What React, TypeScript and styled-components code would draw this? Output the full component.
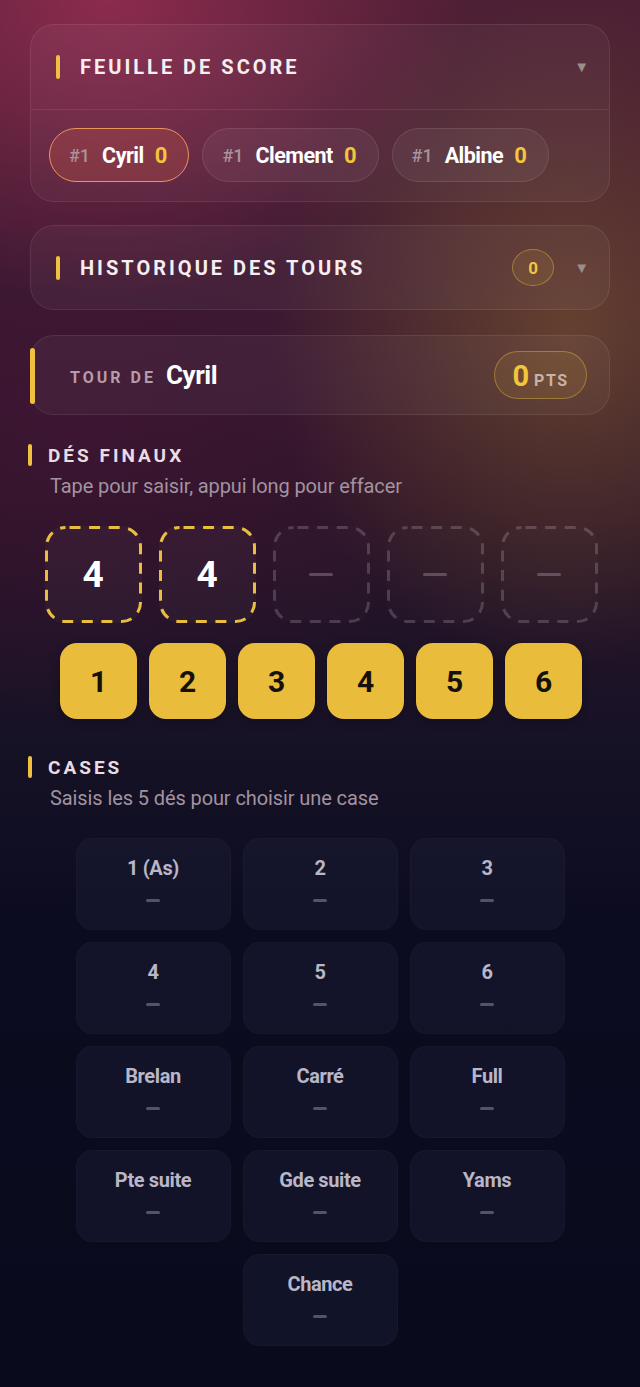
import React from "react";
import styled, { createGlobalStyle } from "styled-components";

const Global = createGlobalStyle`
  html, body { margin: 0; padding: 0; }
  body {
    font-family: Roboto, "Noto Sans", "Liberation Sans", sans-serif;
    background: #090a1c;
  }
  * { box-sizing: border-box; }
`;

const Page = styled.div`
  min-height: 1387px;
  width: 640px;
  padding: 24px 30px 40px 28px;
  background:
    radial-gradient(ellipse 360px 300px at 110px 0px, rgba(150, 45, 82, 0.85) 0%, rgba(150, 45, 82, 0) 100%),
    radial-gradient(ellipse 300px 340px at 570px 330px, rgba(130, 90, 48, 0.6) 0%, rgba(130, 90, 48, 0) 100%),
    radial-gradient(ellipse 420px 300px at 80px 420px, rgba(70, 20, 55, 0.55) 0%, rgba(70, 20, 55, 0) 100%),
    linear-gradient(180deg, #4e1f35 0%, #3a1a30 22%, #2a1428 38%, #161226 54%, #0c0c20 66%, #090a1c 100%);
  display: flex;
  flex-direction: column;
  color: #fff;
`;

const Card = styled.div<{ $mt?: number }>`
  margin-left: 2px;
  margin-top: ${(p) => p.$mt ?? 0}px;
  border-radius: 24px;
  background: rgba(255, 255, 255, 0.04);
  border: 1px solid rgba(255, 255, 255, 0.08);
  position: relative;
`;

const CardHeader = styled.div<{ $h: number }>`
  height: ${(p) => p.$h}px;
  display: flex;
  align-items: center;
  padding: 0 20px 0 25px;
`;

const Bar = styled.span<{ $h?: number }>`
  width: 4px;
  height: ${(p) => p.$h ?? 24}px;
  border-radius: 3px;
  background: #f0c040;
  flex: none;
`;

const HeaderTitle = styled.h2`
  margin: 0 0 0 20px;
  font-size: 20px;
  font-weight: 700;
  letter-spacing: 3px;
  color: #f6eef0;
  flex: 1;
`;

const Caret = styled.span`
  color: #9c8c8e;
  font-size: 15px;
  margin-left: 20px;
`;

const Divider = styled.div`
  height: 1px;
  background: rgba(255, 255, 255, 0.08);
`;

const ChipRow = styled.div`
  display: flex;
  gap: 13px;
  padding: 18px 18px 19px 18px;
`;

const Chip = styled.div<{ $active?: boolean }>`
  height: 54px;
  border-radius: 27px;
  display: flex;
  align-items: center;
  gap: 11px;
  padding: 0 21px 0 19px;
  background: ${(p) => (p.$active ? "rgba(200, 90, 70, 0.28)" : "rgba(255, 255, 255, 0.05)")};
  border: 1.5px solid ${(p) => (p.$active ? "#e9955e" : "rgba(255, 255, 255, 0.1)")};
`;

const Rank = styled.span`
  font-size: 18px;
  font-weight: 500;
  color: #a9939a;
  margin-right: 1px;
`;

const ChipName = styled.span`
  font-size: 21.5px;
  font-weight: 700;
  color: #fff;
  letter-spacing: -0.5px;
`;

const ChipScore = styled.span`
  font-size: 22px;
  font-weight: 700;
  color: #f2c53d;
`;

const CountBadge = styled.span`
  width: 42px;
  height: 37px;
  border-radius: 50%;
  border: 1.5px solid rgba(230, 185, 60, 0.45);
  background: rgba(230, 185, 60, 0.1);
  color: #f2c53d;
  font-size: 17px;
  font-weight: 700;
  display: flex;
  align-items: center;
  justify-content: center;
`;

const TurnCard = styled(Card)`
  height: 80px;
  display: flex;
  align-items: center;
  padding: 0 22px 0 39px;
  &::before {
    content: "";
    position: absolute;
    left: -1px;
    top: 12px;
    bottom: 10px;
    width: 5px;
    border-radius: 3px;
    background: #f0c040;
  }
`;

const TurnLabel = styled.span`
  font-size: 16px;
  font-weight: 700;
  letter-spacing: 3px;
  color: #b79ba8;
  margin-right: 10px;
  padding-top: 4px;
`;

const TurnName = styled.span`
  font-size: 26px;
  font-weight: 700;
  color: #fff;
  letter-spacing: -0.4px;
  flex: 1;
`;

const PtsPill = styled.div`
  height: 48px;
  width: 93px;
  border-radius: 24px;
  border: 1.5px solid rgba(230, 185, 60, 0.42);
  background: rgba(230, 185, 60, 0.1);
  display: flex;
  align-items: baseline;
  justify-content: center;
  gap: 5px;
  padding-top: 7px;
`;

const PtsValue = styled.span`
  font-size: 29px;
  font-weight: 700;
  color: #f2c53d;
`;

const PtsUnit = styled.span`
  font-size: 16px;
  font-weight: 700;
  letter-spacing: 1.5px;
  color: #c9b2aa;
`;

const Section = styled.section<{ $mt: number }>`
  margin-top: ${(p) => p.$mt}px;
  display: flex;
  flex-direction: column;
`;

const SectionHead = styled.div`
  display: flex;
  align-items: center;
  gap: 16px;
  height: 24px;
`;

const SectionTitle = styled.h3`
  margin: 0;
  font-size: 19px;
  font-weight: 700;
  letter-spacing: 3px;
  color: #e9dce3;
`;

const SectionHint = styled.p`
  margin: 8px 0 0 22px;
  font-size: 20px;
  line-height: 23px;
  color: #a3929f;
  letter-spacing: -0.1px;
`;

const DiceRow = styled.div`
  display: flex;
  justify-content: center;
  gap: 17px;
  margin-top: 28px;
  padding-left: 4px;
`;

const DieSlot = styled.div<{ $filled?: boolean }>`
  position: relative;
  width: 97px;
  height: 97px;
  border-radius: 20px;
  background: ${(p) => (p.$filled ? "rgba(255, 255, 255, 0.03)" : "rgba(255, 255, 255, 0.012)")};
  display: flex;
  align-items: center;
  justify-content: center;
  font-size: 37px;
  font-weight: 700;
  color: #fff;
`;

const SlotOutline = styled.svg`
  position: absolute;
  inset: 0;
  width: 100%;
  height: 100%;
  pointer-events: none;
`;

const EmptyDash = styled.span`
  display: block;
  width: 24px;
  height: 3px;
  border-radius: 2px;
  background: rgba(190, 170, 185, 0.35);
`;

const PadRow = styled.div`
  display: flex;
  justify-content: center;
  gap: 12px;
  margin-top: 20px;
  padding-left: 4px;
`;

const PadButton = styled.button`
  width: 77px;
  height: 76px;
  border: none;
  border-radius: 17px;
  background: #e9bc3c;
  color: #15110a;
  font-family: inherit;
  font-size: 30px;
  font-weight: 700;
  box-shadow: 0 3px 8px rgba(0, 0, 0, 0.25);
  display: flex;
  align-items: center;
  justify-content: center;
  padding: 0;
`;

const Grid = styled.div`
  display: grid;
  grid-template-columns: repeat(3, 155px);
  grid-auto-rows: 92px;
  gap: 12px;
  justify-content: center;
  margin-top: 28px;
  padding-left: 2px;
`;

const Cell = styled.div<{ $col?: number }>`
  grid-column: ${(p) => (p.$col ? `${p.$col}` : "auto")};
  border-radius: 17px;
  background: rgba(26, 27, 52, 0.5);
  border: 1px solid rgba(255, 255, 255, 0.025);
  display: flex;
  flex-direction: column;
  align-items: center;
  padding-top: 17px;
`;

const CellLabel = styled.span`
  font-size: 20px;
  font-weight: 700;
  color: #b9b6c6;
  letter-spacing: -0.4px;
`;

const CellDash = styled.span`
  margin-top: 19px;
  width: 14px;
  height: 3px;
  border-radius: 2px;
  background: #535468;
`;

const players = ["Cyril", "Clement", "Albine"];
const dice: (number | null)[] = [4, 4, null, null, null];
const cells = [
  "1 (As)", "2", "3", "4", "5", "6",
  "Brelan", "Carré", "Full", "Pte suite", "Gde suite", "Yams",
];

function Outline({ filled }: { filled: boolean }) {
  return (
    <SlotOutline viewBox="0 0 97 97">
      <rect
        x="1.5"
        y="1.5"
        width="94"
        height="94"
        rx="19"
        fill="none"
        stroke={filled ? "#e8bd40" : "rgba(200, 188, 200, 0.24)"}
        strokeWidth="3"
        strokeDasharray="11 8.6"
        strokeDashoffset="-4"
      />
    </SlotOutline>
  );
}

export default function App() {
  return (
    <>
      <Global />
      <Page>
        <Card>
          <CardHeader $h={84}>
            <Bar />
            <HeaderTitle>FEUILLE DE SCORE</HeaderTitle>
            <Caret>▼</Caret>
          </CardHeader>
          <Divider />
          <ChipRow>
            {players.map((p, i) => (
              <Chip key={p} $active={i === 0}>
                <Rank>#1</Rank>
                <ChipName>{p}</ChipName>
                <ChipScore>0</ChipScore>
              </Chip>
            ))}
          </ChipRow>
        </Card>

        <Card $mt={23}>
          <CardHeader $h={83}>
            <Bar />
            <HeaderTitle>HISTORIQUE DES TOURS</HeaderTitle>
            <CountBadge>0</CountBadge>
            <Caret>▼</Caret>
          </CardHeader>
        </Card>

        <TurnCard $mt={25}>
          <TurnLabel>TOUR DE</TurnLabel>
          <TurnName>Cyril</TurnName>
          <PtsPill>
            <PtsValue>0</PtsValue>
            <PtsUnit>PTS</PtsUnit>
          </PtsPill>
        </TurnCard>

        <Section $mt={28}>
          <SectionHead>
            <Bar $h={22} />
            <SectionTitle>DÉS FINAUX</SectionTitle>
          </SectionHead>
          <SectionHint>Tape pour saisir, appui long pour effacer</SectionHint>
          <DiceRow>
            {dice.map((d, i) => (
              <DieSlot key={i} $filled={d !== null}>
                <Outline filled={d !== null} />
                {d !== null ? d : <EmptyDash />}
              </DieSlot>
            ))}
          </DiceRow>
          <PadRow>
            {[1, 2, 3, 4, 5, 6].map((n) => (
              <PadButton key={n}>{n}</PadButton>
            ))}
          </PadRow>
        </Section>

        <Section $mt={36}>
          <SectionHead>
            <Bar $h={22} />
            <SectionTitle>CASES</SectionTitle>
          </SectionHead>
          <SectionHint>Saisis les 5 dés pour choisir une case</SectionHint>
          <Grid>
            {cells.map((c) => (
              <Cell key={c}>
                <CellLabel>{c}</CellLabel>
                <CellDash />
              </Cell>
            ))}
            <Cell $col={2}>
              <CellLabel>Chance</CellLabel>
              <CellDash />
            </Cell>
          </Grid>
        </Section>
      </Page>
    </>
  );
}
